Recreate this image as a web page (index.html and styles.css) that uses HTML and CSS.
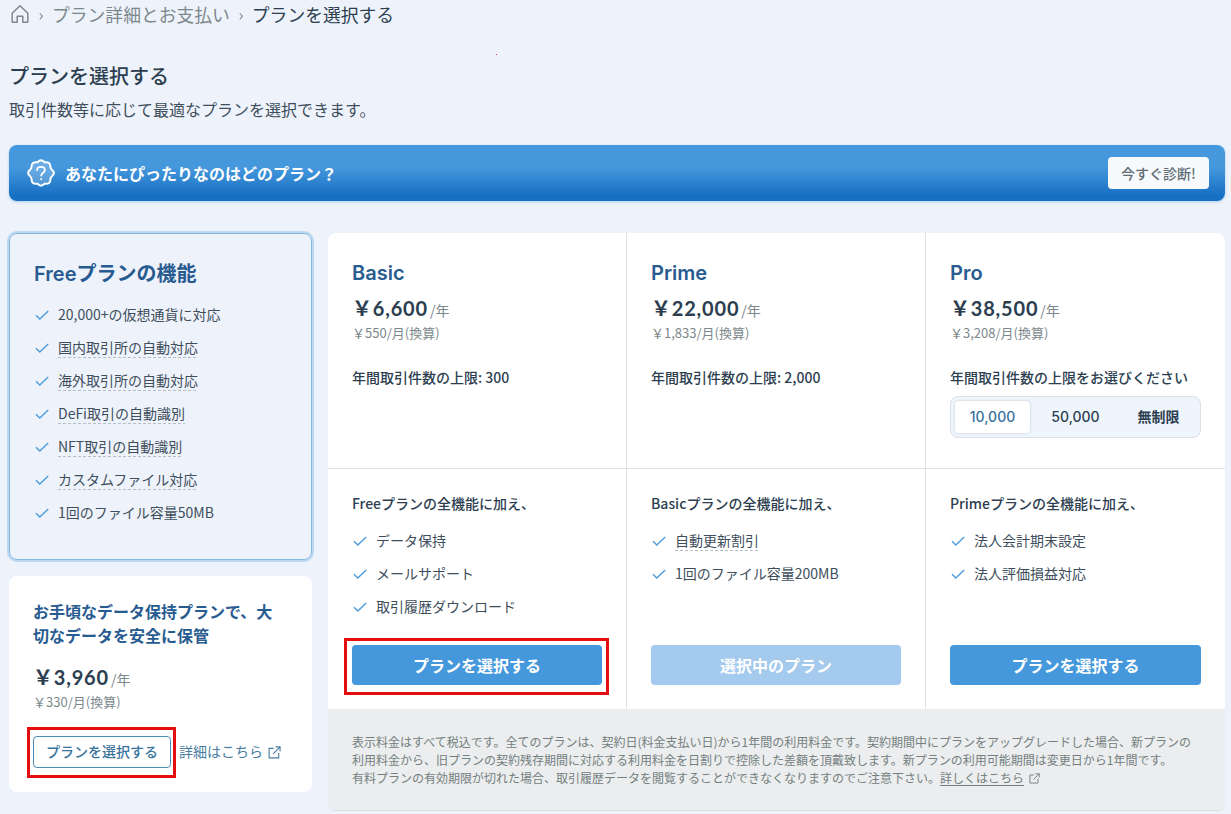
FILE: index.html
```html
<!DOCTYPE html>
<html lang="ja">
<head>
    <meta charset="UTF-8">
    <meta name="viewport" content="width=device-width, initial-scale=1.0">
    <title>プランを選択する</title>
    <link rel="stylesheet" href="styles.css">
</head>
<body>
    <!-- Shared icons -->
    <svg class="sprite" width="0" height="0">
        <symbol id="check" viewBox="0 0 14 10">
            <path d="M1 5.2 4.8 9 13.2 1" fill="none" stroke="currentColor" stroke-width="1.4"/>
        </symbol>
        <symbol id="external" viewBox="0 0 14 14">
            <path d="M6.2 2.5H1.2v10.3h10.3V7.6M8.2 1h4.8v4.8M13 1 5.6 8.4" fill="none" stroke="currentColor" stroke-width="1.2"/>
        </symbol>
    </svg>

    <nav class="breadcrumb">
        <svg class="home" viewBox="0 0 20 20">
            <path d="M2.2 9.2 10 1.8l7.8 7.4v8.5q0 .6-.6.6h-4.400v-6.100H7.200v6.100H2.800q-.6 0-.6-.6z" fill="none" stroke="currentColor" stroke-width="1.5" stroke-linejoin="round"/>
        </svg>
        <span class="separator">›</span>
        <a>プラン詳細とお支払い</a>
        <span class="separator">›</span>
        <span class="current">プランを選択する</span>
    </nav>
    <span class="dot"></span>

    <h1>プランを選択する</h1>
    <p class="lead">取引件数等に応じて最適なプランを選択できます。</p>

    <div class="banner">
        <svg class="badge" viewBox="0 0 28 28" fill="none" stroke="#fff" stroke-width="2" stroke-linecap="round" stroke-linejoin="round">
            <path fill="#fff" fill-opacity=".2" d="M10.500 3.300Q14-.9 17.500 3.300 23.500 2.400 23.500 8 23.500 9.600 24.700 10.500 29.100 14 24.700 17.500 23.500 18.400 23.500 20 23.500 25.600 17.500 24.700 14 28.900 10.500 24.700 4.500 25.600 4.500 20 4.500 18.400 3.300 17.500-1.100 14 3.300 10.500 4.500 9.600 4.500 8 4.500 2.400 10.500 3.300z"/>
            <path stroke-width="1.8" d="M10.200 11.200q0-3.300 3.800-3.300t3.900 3.100c0 2.600-3.700 2.800-3.700 5.600M14.200 20v.2"/>
        </svg>
        <strong>あなたにぴったりなのはどのプラン？</strong>
        <button class="diagnose">今すぐ診断!</button>
    </div>

    <div class="layout">
        <aside>
            <section class="free-plan">
                <h2>Freeプランの機能</h2>
                <ul class="features">
                    <li><svg><use href="#check"/></svg><span>20,000+の仮想通貨に対応</span></li>
                    <li><svg><use href="#check"/></svg><span class="hint">国内取引所の自動対応</span></li>
                    <li><svg><use href="#check"/></svg><span class="hint">海外取引所の自動対応</span></li>
                    <li><svg><use href="#check"/></svg><span class="hint">DeFi取引の自動識別</span></li>
                    <li><svg><use href="#check"/></svg><span class="hint">NFT取引の自動識別</span></li>
                    <li><svg><use href="#check"/></svg><span class="hint">カスタムファイル対応</span></li>
                    <li><svg><use href="#check"/></svg><span>1回のファイル容量50MB</span></li>
                </ul>
            </section>
            <section class="storage-plan">
                <h3>お手頃なデータ保持プランで、大切なデータを安全に保管</h3>
                <div class="price"><b>￥3,960</b><span>/年</span></div>
                <div class="monthly">￥330/月(換算)</div>
                <div class="actions">
                    <div class="marked marked-small"><button class="outline-btn">プランを選択する</button></div>
                    <a class="details">詳細はこちら<svg><use href="#external"/></svg></a>
                </div>
            </section>
        </aside>

        <main class="plans">
            <div class="plan-grid">
                <section class="plan-head">
                    <h2>Basic</h2>
                    <div class="price"><b>￥6,600</b><span>/年</span></div>
                    <div class="monthly">￥550/月(換算)</div>
                    <p class="limit">年間取引件数の上限: 300</p>
                </section>
                <section class="plan-head">
                    <h2>Prime</h2>
                    <div class="price"><b>￥22,000</b><span>/年</span></div>
                    <div class="monthly">￥1,833/月(換算)</div>
                    <p class="limit">年間取引件数の上限: 2,000</p>
                </section>
                <section class="plan-head">
                    <h2>Pro</h2>
                    <div class="price"><b>￥38,500</b><span>/年</span></div>
                    <div class="monthly">￥3,208/月(換算)</div>
                    <p class="limit">年間取引件数の上限をお選びください</p>
                    <div class="tabs">
                        <button class="active">10,000</button>
                        <button>50,000</button>
                        <button>無制限</button>
                    </div>
                </section>

                <section class="plan-body">
                    <h4>Freeプランの全機能に加え、</h4>
                    <ul class="features">
                        <li><svg><use href="#check"/></svg><span>データ保持</span></li>
                        <li><svg><use href="#check"/></svg><span>メールサポート</span></li>
                        <li><svg><use href="#check"/></svg><span>取引履歴ダウンロード</span></li>
                    </ul>
                    <div class="marked marked-large"><button class="plan-btn">プランを選択する</button></div>
                </section>
                <section class="plan-body">
                    <h4>Basicプランの全機能に加え、</h4>
                    <ul class="features">
                        <li><svg><use href="#check"/></svg><span class="hint">自動更新割引</span></li>
                        <li><svg><use href="#check"/></svg><span>1回のファイル容量200MB</span></li>
                    </ul>
                    <button class="plan-btn" disabled>選択中のプラン</button>
                </section>
                <section class="plan-body">
                    <h4>Primeプランの全機能に加え、</h4>
                    <ul class="features">
                        <li><svg><use href="#check"/></svg><span>法人会計期末設定</span></li>
                        <li><svg><use href="#check"/></svg><span>法人評価損益対応</span></li>
                    </ul>
                    <button class="plan-btn">プランを選択する</button>
                </section>
            </div>
            <footer class="notes">
                表示料金はすべて税込です。全てのプランは、契約日(料金支払い日)から1年間の利用料金です。契約期間中にプランをアップグレードした場合、新プランの<br>利用料金から、旧プランの契約残存期間に対応する利用料金を日割りで控除した差額を頂戴致します。新プランの利用可能期間は変更日から1年間です。<br>有料プランの有効期限が切れた場合、取引履歴データを閲覧することができなくなりますのでご注意下さい。<a>詳しくはこちら</a><svg><use href="#external"/></svg>
            </footer>
        </main>
    </div>
</body>
</html>
```
FILE: styles.css
```css
* {
    box-sizing: border-box;
}

body {
    margin: 0;
    padding: 0 6px 0 9px;
    height: 814px;
    overflow: hidden;
    background: #eef3fb;
    color: #2c3e50;
    font-family: "Noto Sans CJK JP", sans-serif;
    font-size: 14px;
    line-height: 20px;
}

h1, h2, h3, h4, p, ul {
    margin: 0;
    padding: 0;
}

button {
    font-family: inherit;
    padding: 0;
    border: 0;
    cursor: pointer;
}

.sprite {
    position: absolute;
}

.breadcrumb {
    display: flex;
    align-items: center;
    height: 28px;
    font-size: 17.8px;
    font-weight: 400;
    color: #7d888c;
    white-space: nowrap;
}

.breadcrumb .home {
    width: 20px;
    height: 20px;
    margin-left: 1px;
}

.breadcrumb .separator {
    width: 22px;
    text-align: center;
    font-size: 16px;
}

.breadcrumb .current {
    color: #2c3e50;
}

.dot {
    position: absolute;
    left: 496px;
    top: 54px;
    width: 1px;
    height: 1px;
    background: #e04040;
}

h1 {
    margin-top: 33px;
    font-size: 20px;
    font-weight: 500;
    line-height: 30px;
}

.lead {
    margin-top: 6px;
    font-size: 16px;
    font-weight: 400;
    line-height: 24px;
    color: #3e4e5c;
}

.banner {
    display: flex;
    align-items: center;
    height: 56px;
    margin-top: 24px;
    padding: 0 16px 0 18px;
    border-radius: 8px;
    background: linear-gradient(#4598dc 0%, #4598dc 40%, #1870c4 90%, #1870c4 100%);
    box-shadow: 0 1px 3px rgba(24, 112, 196, .3);
    color: #fff;
}

.banner .badge {
    width: 28px;
    height: 28px;
    margin-right: 10px;
}

.banner strong {
    font-size: 16px;
    font-weight: 700;
}

.diagnose {
    width: 101px;
    height: 32px;
    margin-left: auto;
    border-radius: 4px;
    background: #f7fafd;
    color: #5f6b73;
    font-size: 14px;
    font-weight: 500;
}

.layout {
    display: grid;
    grid-template-columns: 303px 897px;
    gap: 16px;
    margin-top: 32px;
}

.free-plan {
    height: 327px;
    padding: 25px 24px 24px;
    border: 1px solid #85b8e0;
    border-radius: 8px;
    box-shadow: 0 0 0 2px #bcd8f1;
}

h2 {
    font-family: Inter, "Noto Sans CJK JP", sans-serif;
    font-size: 20px;
    font-weight: 600;
    line-height: 30px;
    color: #285b90;
}

.features {
    list-style: none;
}

.features li {
    display: flex;
    align-items: center;
    height: 33px;
    font-weight: 400;
    color: #3e4e5c;
}

.features svg {
    width: 14px;
    height: 10px;
    margin: 1px 9px 0 1px;
    color: #4c9bdc;
}

.features span {
    height: 20px;
    line-height: 18px;
}

.features .hint {
    background: repeating-linear-gradient(90deg, #b3bec6 0 3px, transparent 3px 5px) 0 100% / 100% 1px no-repeat;
}

.free-plan .features {
    margin-top: 9px;
}

.storage-plan {
    height: 216px;
    margin-top: 16px;
    padding: 23px 24px 24px;
    border-radius: 8px;
    background: #fff;
}

.storage-plan h3 {
    width: 242px;
    margin-bottom: 17px;
    font-size: 16px;
    font-weight: 700;
    line-height: 24px;
    color: #285b90;
}

.price {
    display: flex;
    align-items: baseline;
    height: 28px;
    line-height: 26px;
}

.price b {
    font-family: Lato, "Noto Sans CJK JP", sans-serif;
    font-size: 20px;
    font-weight: 700;
    letter-spacing: .8px;
}

.price span {
    margin-left: 2px;
    font-weight: 400;
    color: #7d888c;
}

.monthly {
    font-size: 13px;
    font-weight: 400;
    color: #7d888c;
}

.actions {
    display: flex;
    align-items: center;
    margin-top: 24px;
}

.marked {
    position: relative;
}

/* red frame around the button to press */
.marked::after {
    content: "";
    position: absolute;
    border: 3px solid #e50d0d;
    pointer-events: none;
}

.marked-small::after {
    inset: -9px -5px -10px -6px;
}

.marked-large::after {
    inset: -7px -7px -10px -8px;
}

.outline-btn {
    display: block;
    width: 138px;
    height: 32px;
    padding-bottom: 2px;
    border: 1px solid #4a90b8;
    border-radius: 4px;
    background: #fff;
    color: #39749c;
    font-size: 14px;
    font-weight: 500;
}

.details {
    display: flex;
    align-items: center;
    margin: -2px 0 0 8px;
    font-weight: 400;
    color: #4a7c9f;
}

.details svg {
    width: 13px;
    height: 13px;
    margin: 2px 0 0 5px;
}

.plans {
    height: 577px;
    overflow: hidden;
    border-radius: 8px;
    background: #fff;
    box-shadow: 0 1px 1px #d5dae0;
}

.plan-grid {
    display: grid;
    grid-template-columns: 299px 299px 299px;
    grid-template-rows: 236px 240px;
}

.plan-head {
    padding: 25px 24px 24px;
    border-right: 1px solid #dfe1e4;
    border-bottom: 1px solid #dfe1e4;
}

.plan-body {
    display: flex;
    flex-direction: column;
    padding: 24px;
    border-right: 1px solid #dfe1e4;
}

.plan-grid section:nth-child(3n) {
    border-right: 0;
}

.plan-head .price {
    margin-top: 7px;
}

.limit {
    margin-top: 24px;
    font-weight: 500;
}

.tabs {
    display: flex;
    align-items: center;
    height: 42px;
    margin-top: 9px;
    padding: 4px;
    border: 1px solid #dce1e7;
    border-radius: 8px;
    background: #eef5fd;
}

.tabs button {
    width: 75px;
    height: 32px;
    margin-right: 8px;
    padding-bottom: 2px;
    border-radius: 4px;
    background: none;
    color: #2c3e50;
    font-family: Inter, "Noto Sans CJK JP", sans-serif;
    font-size: 14px;
    font-weight: 500;
}

.tabs button:last-child {
    margin-right: 0;
    font-weight: 700;
}

.tabs .active {
    background: #fff;
    color: #39709f;
    box-shadow: 0 0 2px 1px #d9dfe7;
}

.plan-body h4 {
    font-size: 14px;
    font-weight: 500;
}

.plan-body .features {
    height: 117px;
    margin-top: 11px;
}

.plan-btn {
    display: block;
    width: 100%;
    height: 40px;
    border-radius: 4px;
    background: #4598dc;
    color: #fff;
    font-size: 16px;
    font-weight: 700;
}

.plan-body > .plan-btn,
.plan-body > .marked {
    margin-top: 4px;
}

.plan-btn:disabled {
    background: #a4caee;
}

.notes {
    height: 101px;
    padding: 24px;
    background: #ebedee;
    color: #74807f;
    font-size: 12px;
    font-weight: 400;
    line-height: 18px;
    white-space: nowrap;
}

.notes a {
    text-decoration: underline;
    text-underline-offset: 2px;
}

.notes svg {
    width: 11px;
    height: 11px;
    margin-left: 5px;
    vertical-align: -1px;
}
```
